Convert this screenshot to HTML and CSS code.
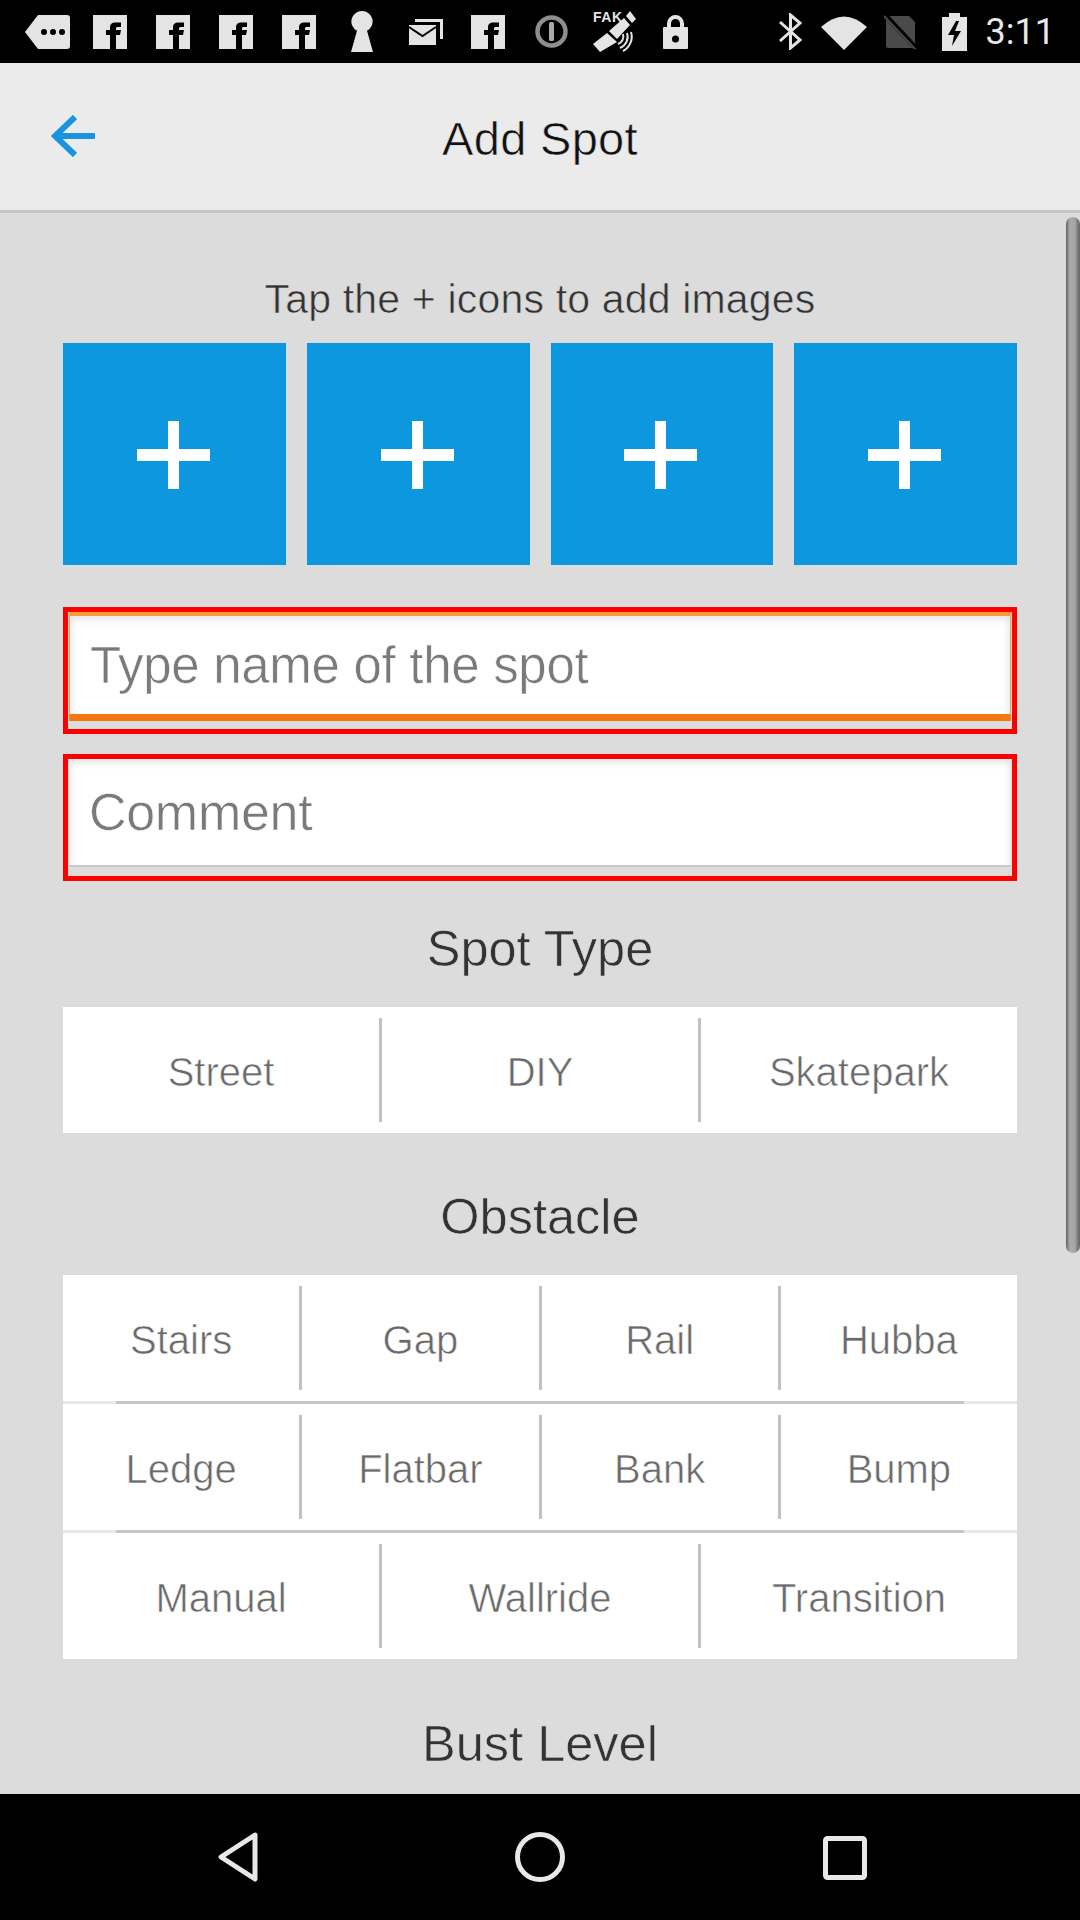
FILE: index.html
```html
<!DOCTYPE html>
<html lang="en">
<head>
  <meta charset="UTF-8" />
  <meta name="viewport" content="width=device-width, initial-scale=1.0"/>
  <title>Add Spot</title>
  <link rel="stylesheet" href="styles.css">
</head>
<body>
  <svg class="defs">
    <defs>
      <g id="fb">
        <rect width="34" height="34" fill="#e4e4e4"/>
        <path d="M17 34V20h-4v-5h4v-3c0-3 2-4.500 5-4.500h6v4.500h-3c-1.500 0-2 .5-2 2V15h5l-1 5h-4v14z" fill="#000"/>
      </g>
    </defs>
  </svg>

  <div class="status-bar">
    <div class="status-left">
      <svg class="ic-tag" viewBox="0 0 45 34"><path d="M0 17 13 0h29q3 0 3 3v28q0 3-3 3H13z" fill="#e4e4e4"/><circle cx="19" cy="17" r="3"/><circle cx="28" cy="17" r="3"/><circle cx="37" cy="17" r="3"/></svg>
      <svg class="ic-fb" viewBox="0 0 34 34"><use href="#fb"/></svg>
      <svg class="ic-fb" viewBox="0 0 34 34"><use href="#fb"/></svg>
      <svg class="ic-fb" viewBox="0 0 34 34"><use href="#fb"/></svg>
      <svg class="ic-fb" viewBox="0 0 34 34"><use href="#fb"/></svg>
      <svg class="ic-key" viewBox="0 0 22 41"><path d="M11 0a10.500 10.500 0 0 1 5 19.800L22 41H0l6-21.200A10.500 10.500 0 0 1 11 0z" fill="#e4e4e4"/></svg>
      <svg class="ic-mail" viewBox="0 0 34 27"><path d="M6 1h28v20h-3V4H6z" fill="#e4e4e4"/><path d="M0 7h27v20H0z" fill="#e4e4e4"/><path d="M0 9l13.500 9L27 9" fill="none" stroke="#000" stroke-width="2"/></svg>
      <svg class="ic-fb" viewBox="0 0 34 34"><use href="#fb"/></svg>
      <svg class="ic-disc" viewBox="0 0 33 33"><circle cx="16.500" cy="16.500" r="14" fill="none" stroke="#8e8e8e" stroke-width="4.500"/><rect x="14" y="7" width="5" height="19" rx="1.500" fill="#a8a8a8"/></svg>
      <div class="ic-fake">
        <span class="fake-label">FAK</span>
        <svg viewBox="0 0 43 41"><path d="M0 33 14 22l10 9-17 10zM16 20 31 7l6 7-13 14zM33 5l4-5 6 8-4 4z" fill="#e4e4e4"/><path d="M30 23a8 8 0 0 1-5 10M34 22a12 12 0 0 1-7 15M38 21a16 16 0 0 1-8 19" fill="none" stroke="#e4e4e4" stroke-width="2"/></svg>
      </div>
      <svg class="ic-lock" viewBox="0 0 25 35"><path d="M6 15V9.500a6.500 6.500 0 0 1 13 0V15" fill="none" stroke="#e4e4e4" stroke-width="4"/><rect y="13" width="25" height="22" rx="1" fill="#e4e4e4"/><circle cx="12.500" cy="25" r="3.500" fill="#000"/></svg>
    </div>
    <div class="status-right">
      <svg class="ic-bt" viewBox="0 0 23 37"><path d="M1 9l20 18-9.500 8V2L21 10 1 28" fill="none" stroke="#e4e4e4" stroke-width="3"/></svg>
      <svg class="ic-wifi" viewBox="0 0 46 36"><path d="M0 13Q23-8 46 13L23 36z" fill="#e4e4e4"/></svg>
      <svg class="ic-sim" viewBox="0 0 33 35"><path d="M4 2h21l6 6v24q0 2-2 2H4q-2 0-2-2V4q0-2 2-2z" fill="#4a4a4a"/><path d="M1 1l31 33" stroke="#000" stroke-width="5"/><path d="M0 2l32 34" stroke="#4a4a4a" stroke-width="2"/></svg>
      <svg class="ic-batt" viewBox="0 0 25 38"><path d="M7 0h11v4h7v34H0V4h7z" fill="#e4e4e4"/><path d="M14 8 6 22h6l-2 11 9-15h-6l4-10z" fill="#000"/></svg>
      <span class="clock">3:11</span>
    </div>
  </div>

  <header class="app-bar">
    <svg class="back-arrow" viewBox="0 0 44 42"><path d="M44 21H5M24 2 4 21l20 19" fill="none" stroke="#1a94de" stroke-width="6"/></svg>
    <h1>Add Spot</h1>
  </header>

  <main class="content">
    <p class="hint">Tap the + icons to add images</p>
    <div class="image-row">
      <div class="image-btn"><span class="plus"></span></div>
      <div class="image-btn"><span class="plus"></span></div>
      <div class="image-btn"><span class="plus"></span></div>
      <div class="image-btn"><span class="plus"></span></div>
    </div>

    <div class="field-wrap">
      <div class="field focused">Type name of the spot</div>
    </div>
    <div class="field-wrap second">
      <div class="field">Comment</div>
    </div>

    <h2 class="spot-type">Spot Type</h2>
    <div class="segments">
      <div class="seg">Street</div>
      <div class="seg">DIY</div>
      <div class="seg">Skatepark</div>
    </div>

    <h2 class="obstacle">Obstacle</h2>
    <div class="obstacles">
      <div class="segments">
        <div class="seg">Stairs</div>
        <div class="seg">Gap</div>
        <div class="seg">Rail</div>
        <div class="seg">Hubba</div>
      </div>
      <div class="rule"></div>
      <div class="segments">
        <div class="seg">Ledge</div>
        <div class="seg">Flatbar</div>
        <div class="seg">Bank</div>
        <div class="seg">Bump</div>
      </div>
      <div class="rule"></div>
      <div class="segments">
        <div class="seg">Manual</div>
        <div class="seg">Wallride</div>
        <div class="seg">Transition</div>
      </div>
    </div>

    <h2 class="bust">Bust Level</h2>
    <div class="scrollbar"></div>
  </main>

  <nav class="nav-bar">
    <svg class="nav-back" viewBox="0 0 42 50"><path d="M38 3 4 25l34 22z" fill="none" stroke="#e8e8e8" stroke-width="5" stroke-linejoin="round"/></svg>
    <svg class="nav-home" viewBox="0 0 50 50"><circle cx="25" cy="25" r="22.500" fill="none" stroke="#e8e8e8" stroke-width="5"/></svg>
    <svg class="nav-recent" viewBox="0 0 44 44"><rect x="2.500" y="2.500" width="39" height="39" rx="2" fill="none" stroke="#e8e8e8" stroke-width="5"/></svg>
  </nav>
</body>
</html>
```

FILE: styles.css
```css
* {
  box-sizing: border-box;
}
html, body {
  margin: 0;
  padding: 0;
}
body {
  width: 1080px;
  height: 1920px;
  overflow: hidden;
  background: #000;
  font-family: "Liberation Sans", Arial, sans-serif;
}
svg {
  display: block;
  flex: none;
}
.defs {
  width: 0;
  height: 0;
  position: absolute;
}

/* status bar */
.status-bar {
  height: 63px;
  background: #000;
  display: flex;
  justify-content: space-between;
  align-items: center;
  padding: 0 25px;
}
.status-left, .status-right {
  display: flex;
  align-items: center;
}
.ic-tag { width: 45px; height: 34px; margin-right: 23px; }
.ic-fb { width: 34px; height: 34px; margin-right: 29px; }
.ic-key { width: 22px; height: 41px; margin: 0 36px 0 6px; }
.ic-mail { width: 34px; height: 27px; margin-right: 28px; }
.ic-disc { width: 33px; height: 33px; margin: 0 25px 0 1px; }
.ic-fake { width: 43px; height: 41px; margin-right: 27px; position: relative; }
.ic-fake svg { width: 43px; height: 41px; }
.fake-label {
  position: absolute;
  left: 0;
  top: 0;
  font: 700 14px "Liberation Sans", sans-serif;
  line-height: 12px;
  letter-spacing: .5px;
  color: #e4e4e4;
}
.ic-lock { width: 25px; height: 35px; }
.ic-bt { width: 23px; height: 37px; margin-right: 19px; }
.ic-wifi { width: 46px; height: 36px; margin-right: 17px; }
.ic-sim { width: 33px; height: 35px; margin-right: 25px; }
.ic-batt { width: 25px; height: 38px; margin-right: 19px; }
.clock {
  font: 400 36px Roboto, sans-serif;
  color: #e8e8e8;
}

/* app bar */
.app-bar {
  height: 150px;
  padding-top: 4px;
  background: #ebebeb;
  border-bottom: 3px solid #c4c4c4;
  display: flex;
  align-items: center;
  justify-content: center;
  position: relative;
}
.app-bar h1 {
  margin: 0;
  font-size: 47px;
  font-weight: 400;
  letter-spacing: .3px;
  color: #111;
  -webkit-text-stroke: .6px #ebebeb;
}
.back-arrow {
  position: absolute;
  left: 51px;
  top: 52px;
  width: 44px;
  height: 42px;
}

/* main form */
.content {
  height: 1581px;
  background: #dcdcdc;
  padding: 0 63px;
  position: relative;
  overflow: hidden;
}
.hint {
  margin: 0;
  height: 130px;
  padding-top: 63px;
  line-height: 46px;
  text-align: center;
  font-size: 41px;
  letter-spacing: .17px;
  color: #333;
  -webkit-text-stroke: .6px #dcdcdc;
}
.image-row {
  display: flex;
  gap: 21px;
}
.image-btn {
  width: 223px;
  height: 222px;
  background: #0c97df;
  display: flex;
  align-items: center;
  justify-content: center;
}
.plus {
  width: 73px;
  height: 68px;
  margin: 2px 2px 0 0;
  background:
    linear-gradient(#fff, #fff) center / 100% 12px no-repeat,
    linear-gradient(#fff, #fff) center / 11px 100% no-repeat;
}
.field-wrap {
  width: 954px;
  height: 127px;
  margin-top: 42px;
  border: 5px solid #f00;
  background: #dcdcdc;
}
.field-wrap.second {
  margin-top: 20px;
}
.field {
  height: 108px;
  margin: 0 1px;
  padding: 0 20px;
  display: flex;
  align-items: center;
  font-size: 52px;
  letter-spacing: -.3px;
  color: #7a7a7a;
  -webkit-text-stroke: .6px #fff;
  background: #fff;
  border-bottom: 2px solid #c8c8c8;
  box-shadow: inset 0 10px 10px -8px #ddd, inset 8px 0 10px -8px #ddd, inset -8px 0 10px -8px #ddd;
}
.field.focused {
  height: 109px;
  font-size: 51px;
  border: 1px solid #f6a04a;
  border-top: 4px solid #f89b3c;
  border-bottom: 7px solid #f4780f;
}
h2 {
  margin: 0;
  text-align: center;
  font-weight: 400;
  font-size: 50.500px;
  line-height: 56px;
  color: #333;
  -webkit-text-stroke: .6px #dcdcdc;
}
.spot-type { margin-top: 40px; margin-bottom: 30px; }
.obstacle { margin-top: 56px; margin-bottom: 30px; }
.bust { margin-top: 57px; }
.segments {
  display: flex;
  height: 126px;
  background: #fff;
  align-items: center;
}
.seg {
  flex: 1;
  height: 104px;
  padding-top: 4px;
  display: flex;
  align-items: center;
  justify-content: center;
  font-size: 40px;
  color: #6a6a6a;
  -webkit-text-stroke: .6px #fff;
  border-left: 3px solid #c2c2c2;
}
.seg:first-child {
  border-left: none;
}
.rule {
  height: 3px;
  background: linear-gradient(to right, #e8e8e8 0 53px, #c6c6c6 53px 901px, #e8e8e8 901px);
}
.scrollbar {
  position: absolute;
  right: 0;
  top: 4px;
  width: 14px;
  height: 1036px;
  border-radius: 7px;
  background: linear-gradient(to right, #5f5f5f, #8a8a8a 2px, #ababab 4px, #a5a5a5 9px, #777 12px, #666);
}

/* bottom nav */
.nav-bar {
  height: 126px;
  background: #000;
  position: relative;
}
.nav-bar svg {
  position: absolute;
}
.nav-back { left: 217px; top: 38px; width: 42px; height: 50px; }
.nav-home { left: 515px; top: 38px; width: 50px; height: 50px; }
.nav-recent { left: 823px; top: 42px; width: 44px; height: 44px; }
```
